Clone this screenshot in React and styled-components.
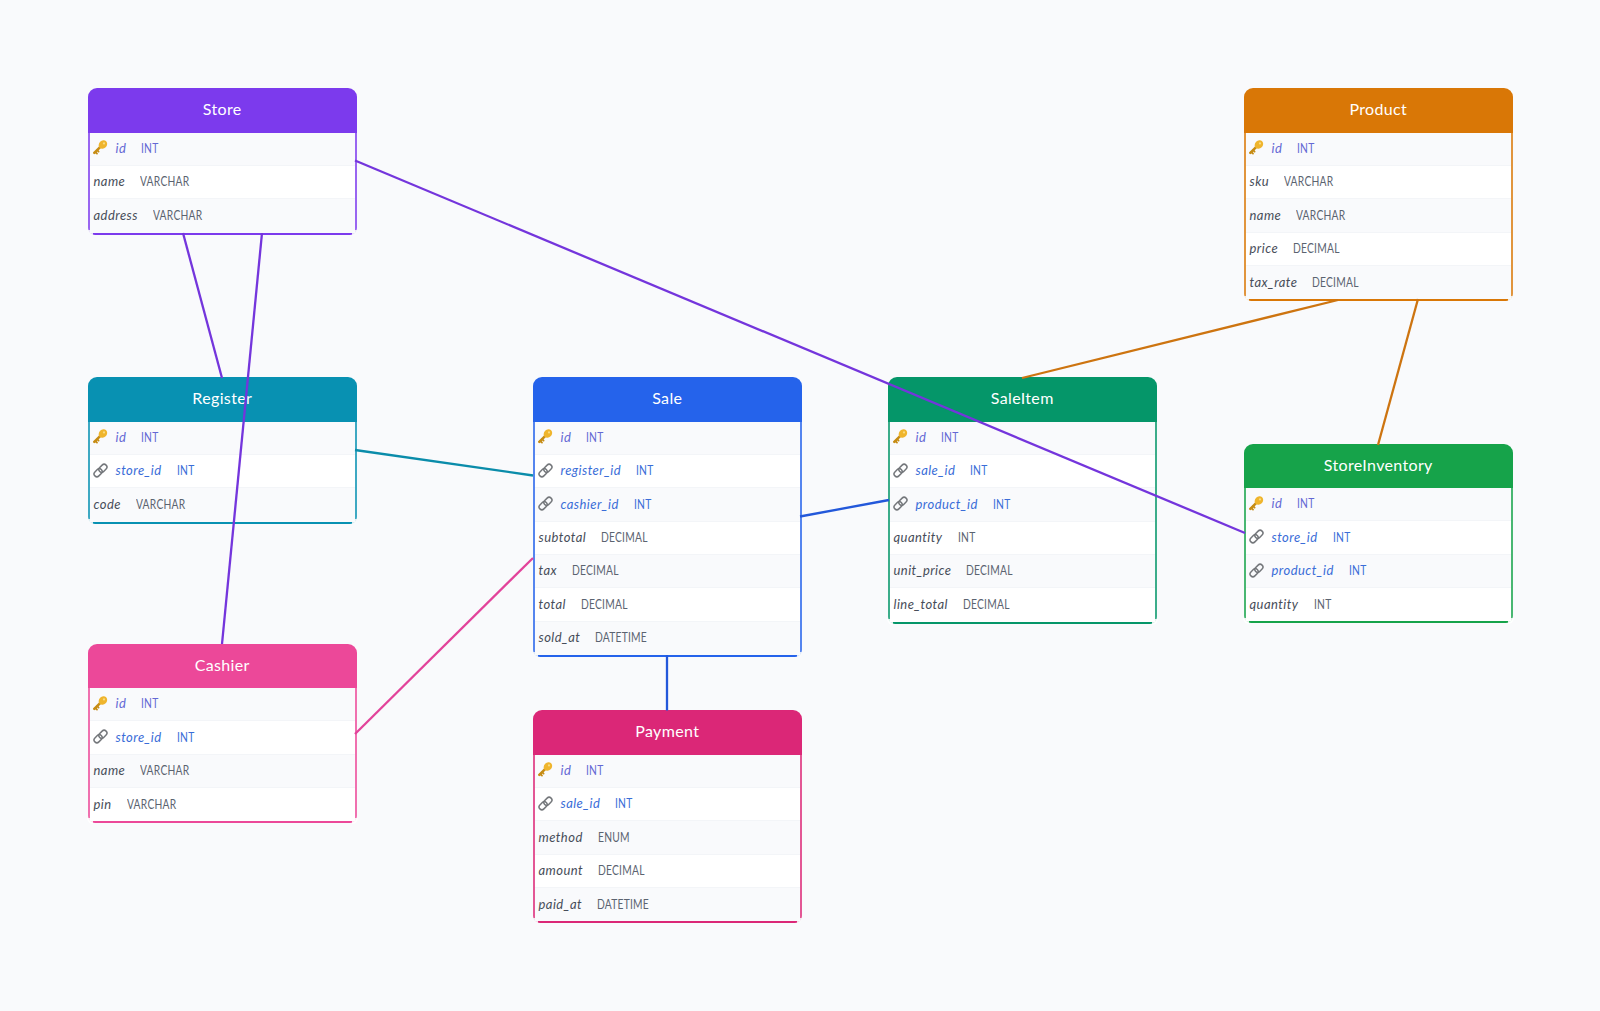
import styled, { createGlobalStyle } from "styled-components";

const GlobalStyle = createGlobalStyle`
  html, body {
    margin: 0;
    padding: 0;
    background: #f9fafc;
  }
`;

const Canvas = styled.div`
  position: relative;
  width: 1600px;
  height: 1011px;
  overflow: hidden;
  background: #f9fafc;
  font-family: "Lato", "Open Sans", sans-serif;
`;

/* table nodes sit at free positions on the diagram */
const Card = styled.div`
  position: absolute;
  left: ${(p) => p.$x}px;
  top: ${(p) => p.$y}px;
  width: 268.5px;
`;

const Header = styled.div`
  box-sizing: border-box;
  height: 44.5px;
  padding-bottom: 3px;
  display: flex;
  align-items: center;
  justify-content: center;
  background: ${(p) => p.$accent};
  border-radius: 9px 9px 0 0;
  color: #fff;
  font-size: 16px;
  letter-spacing: 0.35px;
`;

const Body = styled.div`
  border: 2px solid color-mix(in srgb, ${(p) => p.$accent} 78%, white);
  border-top: none;
  border-bottom-color: ${(p) => p.$accent};
  border-radius: 0 0 7px 7px;
`;

const Row = styled.div`
  position: relative;
  box-sizing: border-box;
  height: 33.35px;
  margin: 0 -0.5px;
  display: flex;
  align-items: center;
  padding: 0 4px 1.5px;
  background: ${(p) => (p.$odd ? "#f9fafc" : "#fff")};
  border-bottom: 1px solid #f3f5f8;
  font-size: 13px;

  &:last-child {
    border-bottom: none;
  }

  /* the last row's square background hides the card's bottom corners */
  &:last-child::before,
  &:last-child::after {
    content: "";
    position: absolute;
    bottom: -3px;
    width: 6px;
    height: 6px;
    opacity: 0.85;
    background: ${(p) => (p.$odd ? "#f9fafc" : "#fff")};
  }

  &:last-child::before {
    left: -2.5px;
    border-radius: 0 0 0 6px;
  }

  &:last-child::after {
    right: -2.5px;
    border-radius: 0 0 6px 0;
  }
`;

const IconSlot = styled.span`
  display: inline-flex;
  width: 22.5px;
  margin-left: -0.5px;
  flex: none;
`;

const FieldName = styled.span`
  font-style: italic;
  letter-spacing: 0.45px;
  color: ${(p) => (p.$kind === "pk" ? "#6468d4" : p.$kind === "fk" ? "#3a6dd8" : "#474d59")};
  margin-right: 15px;
`;

const FieldType = styled.span`
  display: inline-block;
  transform: scaleX(0.76);
  transform-origin: left center;
  font-size: 13.5px;
  letter-spacing: 0.3px;
  color: ${(p) => (p.$kind === "pk" ? "#6468d4" : p.$kind === "fk" ? "#3a6dd8" : "#5b6370")};
`;

const Lines = styled.svg`
  position: absolute;
  inset: 0;
  z-index: 2;
  pointer-events: none;
`;

const KeyIcon = () => (
  <svg width="15" height="15" viewBox="0 0 15 15">
    <path d="M1.3 12.9 L7.6 6.6" stroke="#c68c14" strokeWidth="2.5" strokeLinecap="round" />
    <path d="M2.4 12 L4 13.6 M4.2 10.2 L5.6 11.6" stroke="#c68c14" strokeWidth="1.8" strokeLinecap="round" />
    <ellipse cx="9.9" cy="4.6" rx="4.6" ry="3.9" transform="rotate(-45 9.9 4.6)" fill="#efb52d" />
    <circle cx="11" cy="3.4" r="1.1" fill="#f9da80" />
  </svg>
);

const LinkIcon = () => (
  <svg width="15" height="15" viewBox="0 0 15 15" fill="none" stroke="#74777b" strokeWidth="1.5">
    <rect x="0.6" y="6.9" width="9" height="5.6" rx="2.8" transform="rotate(-45 5.1 9.7)" />
    <rect x="5.4" y="2.5" width="9" height="5.6" rx="2.8" transform="rotate(-45 9.9 5.3)" />
  </svg>
);

const tables = [
  {
    name: "Store", x: 88, y: 88, accent: "#7c3aed",
    fields: [["id", "INT", "pk"], ["name", "VARCHAR"], ["address", "VARCHAR"]],
  },
  {
    name: "Register", x: 88, y: 377, accent: "#0891b2",
    fields: [["id", "INT", "pk"], ["store_id", "INT", "fk"], ["code", "VARCHAR"]],
  },
  {
    name: "Cashier", x: 88, y: 643.5, accent: "#ec4899",
    fields: [["id", "INT", "pk"], ["store_id", "INT", "fk"], ["name", "VARCHAR"], ["pin", "VARCHAR"]],
  },
  {
    name: "Sale", x: 533, y: 377, accent: "#2563eb",
    fields: [
      ["id", "INT", "pk"], ["register_id", "INT", "fk"], ["cashier_id", "INT", "fk"],
      ["subtotal", "DECIMAL"], ["tax", "DECIMAL"], ["total", "DECIMAL"], ["sold_at", "DATETIME"],
    ],
  },
  {
    name: "Payment", x: 533, y: 710, accent: "#db2777",
    fields: [
      ["id", "INT", "pk"], ["sale_id", "INT", "fk"], ["method", "ENUM"],
      ["amount", "DECIMAL"], ["paid_at", "DATETIME"],
    ],
  },
  {
    name: "SaleItem", x: 888, y: 377, accent: "#059669",
    fields: [
      ["id", "INT", "pk"], ["sale_id", "INT", "fk"], ["product_id", "INT", "fk"],
      ["quantity", "INT"], ["unit_price", "DECIMAL"], ["line_total", "DECIMAL"],
    ],
  },
  {
    name: "Product", x: 1244, y: 88, accent: "#d97706",
    fields: [
      ["id", "INT", "pk"], ["sku", "VARCHAR"], ["name", "VARCHAR"],
      ["price", "DECIMAL"], ["tax_rate", "DECIMAL"],
    ],
  },
  {
    name: "StoreInventory", x: 1244, y: 443.5, accent: "#16a34a",
    fields: [["id", "INT", "pk"], ["store_id", "INT", "fk"], ["product_id", "INT", "fk"], ["quantity", "INT"]],
  },
];

const relations = [
  [355, 160.5, 1245, 533, "#7435dc"],
  [183, 233, 222, 378, "#7435dc"],
  [262, 233, 222, 644, "#7435dc"],
  [355, 450, 533, 475.5, "#0a8caa"],
  [355, 734, 533, 558, "#e2439a"],
  [800, 516.5, 889, 500, "#2358da"],
  [667, 655, 667, 710.5, "#2358da"],
  [1338, 300, 1022, 378, "#cd7410"],
  [1418, 299, 1378, 445, "#cd7410"],
];

const Table = ({ table }) => (
  <Card $x={table.x} $y={table.y}>
    <Header $accent={table.accent}>{table.name}</Header>
    <Body $accent={table.accent}>
      {table.fields.map(([name, type, kind], i) => (
        <Row key={name} $odd={i % 2 === 0}>
          {kind && <IconSlot>{kind === "pk" ? <KeyIcon /> : <LinkIcon />}</IconSlot>}
          <FieldName $kind={kind}>{name}</FieldName>
          <FieldType $kind={kind}>{type}</FieldType>
        </Row>
      ))}
    </Body>
  </Card>
);

export default function App() {
  return (
    <Canvas>
      <GlobalStyle />
      {tables.map((t) => (
        <Table key={t.name} table={t} />
      ))}
      <Lines width="1600" height="1011">
        {relations.map(([x1, y1, x2, y2, color], i) => (
          <line key={i} x1={x1} y1={y1} x2={x2} y2={y2} stroke={color} strokeWidth="2.3" />
        ))}
      </Lines>
    </Canvas>
  );
}
